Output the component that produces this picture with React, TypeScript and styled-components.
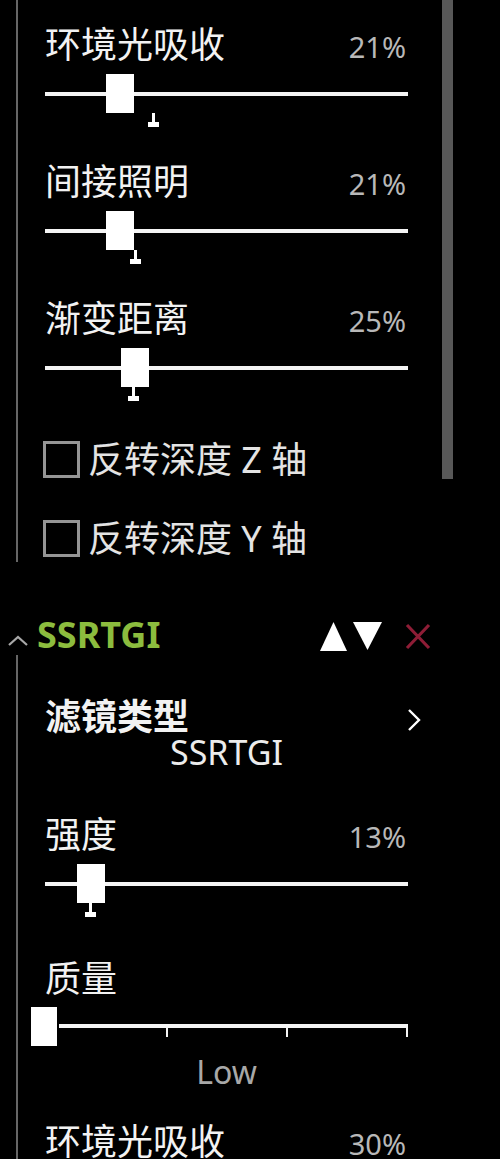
import React from 'react';
import styled, { createGlobalStyle } from 'styled-components';

const GlobalStyle = createGlobalStyle`
    body {
        margin: 0;
        background: #000;
        font-family: 'Noto Sans', 'Noto Sans CJK SC', sans-serif;
    }
`;

const TRACK = 363;

const Page = styled.div`
    background: #000;
    min-height: 1159px;
    overflow: hidden;
`;

const TopArea = styled.div`
    display: flex;
    align-items: flex-start;
`;

const Rail = styled.div<{ $top: number; $bottom: number; $width: number }>`
    box-sizing: border-box;
    width: ${(p) => p.$width}px;
    margin-left: 16px;
    border-left: 2px solid #666;
    padding: ${(p) => p.$top}px 0 ${(p) => p.$bottom}px 27px;
    display: flex;
    flex-direction: column;
`;

const Scrollbar = styled.div`
    width: 11px;
    height: 479px;
    background: #585858;
    flex-shrink: 0;
`;

const Row = styled.div<{ $gap?: number }>`
    width: ${TRACK}px;
    margin-bottom: ${(p) => p.$gap ?? 0}px;
`;

const LabelLine = styled.div`
    display: flex;
    justify-content: space-between;
    align-items: baseline;
    height: 42px;
`;

const Label = styled.span<{ $bold?: boolean }>`
    font-size: 36px;
    line-height: 42px;
    color: #f2f2f2;
    font-weight: ${(p) => (p.$bold ? 700 : 400)};
`;

const Percent = styled.span`
    font-size: 29px;
    line-height: 42px;
    color: #b8b8b8;
    padding-right: 2px;
`;

const SliderBlock = styled.div<{ $height: number; $trackTop: number }>`
    position: relative;
    box-sizing: border-box;
    height: ${(p) => p.$height}px;
    padding-top: ${(p) => p.$trackTop}px;
`;

const Track = styled.div<{ $left?: number }>`
    margin-left: ${(p) => p.$left ?? 0}px;
    height: 4px;
    background: #f4f4f4;
`;

const Thumb = styled.div<{ $top: number }>`
    position: absolute;
    top: ${(p) => p.$top}px;
    width: 28px;
    height: 39px;
    background: #fff;
`;

const Marker = styled.div`
    position: absolute;
    top: 47px;
    width: 11px;
    height: 14px;
    display: flex;
    flex-direction: column;
    align-items: center;
`;

const MarkerStem = styled.div`
    width: 3px;
    height: 9px;
    background: #fff;
`;

const MarkerBase = styled.div`
    width: 11px;
    height: 5px;
    background: #fff;
`;

const Tick = styled.div`
    position: absolute;
    top: 24px;
    width: 2px;
    height: 13px;
    background: #f4f4f4;
`;

const Caption = styled.div`
    text-align: center;
    font-size: 32px;
    line-height: 36px;
    color: #a8a8a8;
    margin-top: 8px;
`;

const CheckRow = styled.label<{ $gap?: number }>`
    display: flex;
    align-items: center;
    gap: 8px;
    margin-left: -2px;
    height: 37px;
    margin-bottom: ${(p) => p.$gap ?? 0}px;
`;

const Box = styled.span`
    box-sizing: border-box;
    width: 37px;
    height: 37px;
    border: 3px solid #959595;
`;

const CheckText = styled.span`
    font-size: 36px;
    line-height: 42px;
    color: #e4e4e4;
`;

const Header = styled.div`
    display: flex;
    align-items: center;
    height: 40px;
    margin-top: 53px;
    padding-left: 8px;
`;

const Caret = styled.svg`
    margin-top: 10px;
`;

const Title = styled.span`
    margin-left: 9px;
    font-size: 36px;
    line-height: 40px;
    font-weight: 700;
    color: #8cbc3e;
`;

const Actions = styled.div`
    display: flex;
    align-items: center;
    margin-left: auto;
    margin-right: 67px;
    gap: 6px;
    margin-top: 2px;
`;

const CloseIcon = styled.svg`
    margin-left: 15px;
`;

const FilterLine = styled.div`
    display: flex;
    justify-content: space-between;
    align-items: center;
    width: 376px;
    height: 42px;
`;

const Chevron = styled.svg`
    margin-top: 6px;
`;

const FilterValue = styled.div`
    width: ${TRACK}px;
    text-align: center;
    font-size: 34px;
    line-height: 36px;
    color: #ececec;
    margin-top: -4px;
    margin-bottom: 44px;
`;

type SliderProps = { label: string; value: number; mark: number; gap: number };

const SliderRow = ({ label, value, mark, gap }: SliderProps) => (
    <Row $gap={gap}>
        <LabelLine>
            <Label>{label}</Label>
            <Percent>{value}%</Percent>
        </LabelLine>
        <SliderBlock $height={62} $trackTop={26}>
            <Track />
            <Thumb $top={8} style={{ left: (value / 100) * TRACK - 15 }} />
            <Marker style={{ left: mark * TRACK - 5 }}>
                <MarkerStem />
                <MarkerBase />
            </Marker>
        </SliderBlock>
    </Row>
);

const Check = ({ text, gap }: { text: string; gap?: number }) => (
    <CheckRow $gap={gap}>
        <Box />
        <CheckText>{text}</CheckText>
    </CheckRow>
);

export default function App() {
    return (
        <Page>
            <GlobalStyle />
            <TopArea>
                <Rail $top={24} $bottom={5} $width={426}>
                    <SliderRow label="环境光吸收" value={21} mark={0.297} gap={33} />
                    <SliderRow label="间接照明" value={21} mark={0.248} gap={33} />
                    <SliderRow label="渐变距离" value={25} mark={0.242} gap={39} />
                    <Check text="反转深度 Z 轴" gap={42} />
                    <Check text="反转深度 Y 轴" />
                </Rail>
                <Scrollbar />
            </TopArea>

            <Header>
                <Caret width="20" height="11" viewBox="0 0 20 11">
                    <polyline points="1,10 10,2 19,10" fill="none" stroke="#a8a8a8" strokeWidth="2.2" />
                </Caret>
                <Title>SSRTGI</Title>
                <Actions>
                    <svg width="27" height="29" viewBox="0 0 27 29">
                        <polygon points="13.5,0 27,29 0,29" fill="#fff" />
                    </svg>
                    <svg width="29" height="28" viewBox="0 0 29 28">
                        <polygon points="0,0 29,0 14.5,28" fill="#fff" />
                    </svg>
                    <CloseIcon width="30" height="29" viewBox="0 0 30 29">
                        <path d="M4 3 L26 26 M26 3 L4 26" stroke="#8e1d36" strokeWidth="3.2" />
                    </CloseIcon>
                </Actions>
            </Header>

            <Rail $top={41} $bottom={0} $width={484}>
                <FilterLine>
                    <Label $bold>滤镜类型</Label>
                    <Chevron width="14" height="22" viewBox="0 0 14 22">
                        <polyline points="2,1 12,11 2,21" fill="none" stroke="#fff" strokeWidth="2.4" />
                    </Chevron>
                </FilterLine>
                <FilterValue>SSRTGI</FilterValue>

                <SliderRow label="强度" value={13} mark={0.124} gap={40} />

                <Row $gap={31}>
                    <LabelLine>
                        <Label>质量</Label>
                    </LabelLine>
                    <SliderBlock $height={46} $trackTop={24}>
                        <Track $left={14} />
                        {[121, 241, 361].map((x) => (
                            <Tick key={x} style={{ left: x }} />
                        ))}
                        <Thumb $top={7} style={{ left: -14, width: 26 }} />
                    </SliderBlock>
                    <Caption>Low</Caption>
                </Row>

                <Row>
                    <LabelLine>
                        <Label>环境光吸收</Label>
                        <Percent>30%</Percent>
                    </LabelLine>
                </Row>
            </Rail>
        </Page>
    );
}
